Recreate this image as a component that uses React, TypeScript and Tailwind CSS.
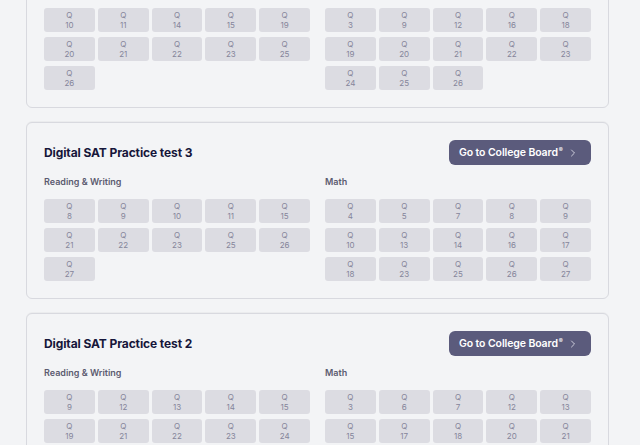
import React from "react";
import { ChevronRight } from "lucide-react";

interface ITest {
  title: string;
  reading: number[];
  math: number[];
}

const tests: ITest[] = [
  {
    title: "Digital SAT Practice test 4",
    reading: [10, 11, 14, 15, 19, 20, 21, 22, 23, 25, 26],
    math: [3, 9, 12, 16, 18, 19, 20, 21, 22, 23, 24, 25, 26],
  },
  {
    title: "Digital SAT Practice test 3",
    reading: [8, 9, 10, 11, 15, 21, 22, 23, 25, 26, 27],
    math: [4, 5, 7, 8, 9, 10, 13, 14, 16, 17, 18, 23, 25, 26, 27],
  },
  {
    title: "Digital SAT Practice test 2",
    reading: [9, 12, 13, 14, 15, 19, 21, 22, 23, 24],
    math: [3, 6, 7, 12, 13, 15, 17, 18, 20, 21],
  },
];

const QuestionGrid = ({ label, items }: { label: string; items: number[] }) => {
  return (
    <div className="flex flex-col">
      <div className="text-[9px] leading-4 font-semibold text-[#5b5b70] mb-[9px]">{label}</div>
      <div className="grid grid-cols-5 gap-x-[3px] gap-y-[5px]">
        {items.map((q) => (
          <div
            key={q}
            className="h-[24px] rounded-[3px] bg-[#dcdce2] flex flex-col items-center justify-center text-[8px] leading-[10px] text-[#85859a]"
          >
            <span>Q</span>
            <span>{q}</span>
          </div>
        ))}
      </div>
    </div>
  );
};

const TestCard = ({ test }: { test: ITest }) => {
  return (
    <div className="w-[583px] rounded-[6px] border border-[#d8d9df] bg-[#f3f4f6] p-[17px] shadow-[0_-1px_0_rgba(0,0,0,0.03)]">
      <div className="flex items-center justify-between h-[25px]">
        <div className="text-[12px] font-bold text-[#16163a] tracking-[-0.1px]">{test.title}</div>
        <button className="h-[25px] w-[142px] rounded-[6px] bg-[#5b5b7c] text-white flex items-center pl-[10px] pr-[12px] justify-between whitespace-nowrap">
          <span className="flex items-start text-[10.5px] font-semibold leading-[13px] tracking-[-0.1px]">
            Go to College Board
            <span className="text-[6px] leading-[8px] ml-[1px]">®</span>
          </span>
          <ChevronRight size={12} strokeWidth={1.8} className="text-[#d8d8e4]" />
        </button>
      </div>
      <div className="grid grid-cols-2 gap-x-[15px] mt-[9px]">
        <QuestionGrid label="Reading & Writing" items={test.reading} />
        <QuestionGrid label="Math" items={test.math} />
      </div>
    </div>
  );
};

const App = () => {
  return (
    <div
      className="min-h-screen w-[640px] h-[445px] overflow-hidden bg-[#f3f4f6]"
      style={{ fontFamily: "Inter, 'Liberation Sans', sans-serif" }}
    >
      <div className="flex flex-col gap-[14px] pl-[26px] -mt-[69px]">
        {tests.map((t) => (
          <TestCard key={t.title} test={t} />
        ))}
      </div>
    </div>
  );
};

export default App;
